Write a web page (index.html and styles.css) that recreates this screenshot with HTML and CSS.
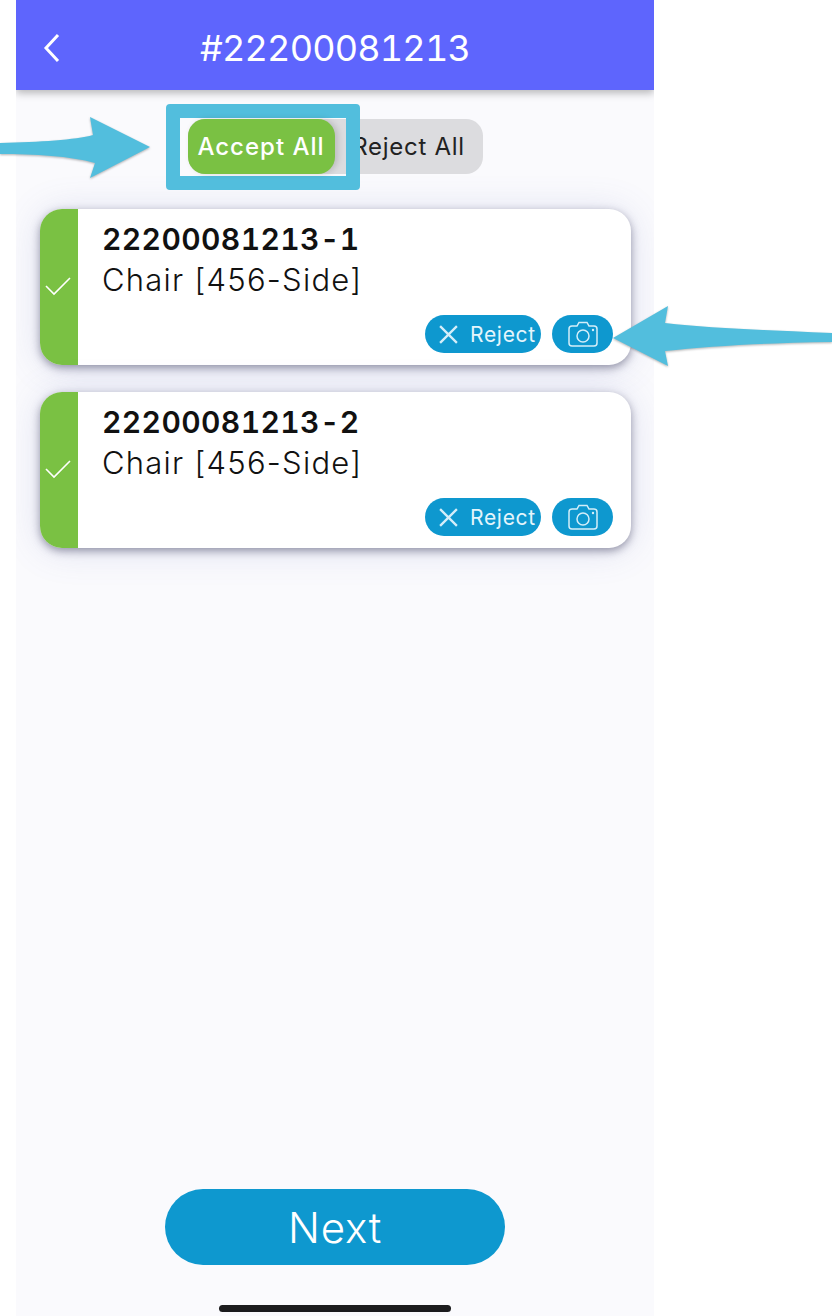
FILE: index.html
```html
<!DOCTYPE html>
<html lang="en">
<head>
    <meta charset="UTF-8">
    <meta name="viewport" content="width=device-width, initial-scale=1.0">
    <title>Order #22200081213</title>
    <link rel="stylesheet" href="styles.css">
</head>
<body>
    <div class="screen">
        <header class="topbar">
            <svg class="back" viewBox="0 0 20 30" width="20" height="30"><path d="M17 2 L5 15 L17 28"/></svg>
            <h1>#22200081213</h1>
        </header>

        <div class="toggle-row">
            <div class="toggle">
                <button class="toggle-on">Accept All</button>
                <button class="toggle-off">Reject All</button>
            </div>
        </div>

        <div class="cards">
            <div class="card">
                <div class="card-status">
                    <svg viewBox="0 0 26 20" width="26" height="20"><path d="M1 10 L9 18 L25 2"/></svg>
                </div>
                <div class="card-body">
                    <div class="card-id">22200081213-1</div>
                    <div class="card-name">Chair [456-Side]</div>
                    <div class="card-actions">
                        <button class="pill pill-reject">
                            <svg viewBox="0 0 20 20" width="21" height="21"><path d="M2 2 L18 18 M18 2 L2 18"/></svg>
                            Reject
                        </button>
                        <button class="pill pill-camera">
                            <svg viewBox="0 0 30 26" width="30" height="26"><path d="M4 5 H9 L11 1.5 H19 L21 5 H26 Q29 5 29 8 V22 Q29 25 26 25 H4 Q1 25 1 22 V8 Q1 5 4 5 Z"/><circle cx="15" cy="15" r="6"/><circle class="dot" cx="25" cy="9" r="1.2"/></svg>
                        </button>
                    </div>
                </div>
            </div>

            <div class="card">
                <div class="card-status">
                    <svg viewBox="0 0 26 20" width="26" height="20"><path d="M1 10 L9 18 L25 2"/></svg>
                </div>
                <div class="card-body">
                    <div class="card-id">22200081213-2</div>
                    <div class="card-name">Chair [456-Side]</div>
                    <div class="card-actions">
                        <button class="pill pill-reject">
                            <svg viewBox="0 0 20 20" width="21" height="21"><path d="M2 2 L18 18 M18 2 L2 18"/></svg>
                            Reject
                        </button>
                        <button class="pill pill-camera">
                            <svg viewBox="0 0 30 26" width="30" height="26"><path d="M4 5 H9 L11 1.5 H19 L21 5 H26 Q29 5 29 8 V22 Q29 25 26 25 H4 Q1 25 1 22 V8 Q1 5 4 5 Z"/><circle cx="15" cy="15" r="6"/><circle class="dot" cx="25" cy="9" r="1.2"/></svg>
                        </button>
                    </div>
                </div>
            </div>
        </div>

        <button class="next">Next</button>
        <div class="home-bar"></div>
    </div>

    <!-- annotations drawn on top of the screenshot -->
    <div class="callout-box"></div>
    <svg class="arrow arrow-left" viewBox="0 0 152 64" width="152" height="64"><path d="M0 27 C40 26 75 24 93 19 L90 1 L150 31 L90 62 L95 47 C70 40 35 38 0 38 Z"/></svg>
    <svg class="arrow arrow-right" viewBox="0 0 219 62" width="219" height="62"><path d="M219 27 C150 24 95 22 52 17 L55 0 L0 32 L55 60 L52 45 C95 40 150 37 219 36 Z"/></svg>
</body>
</html>
```

FILE: styles.css
```css
* {
    box-sizing: border-box;
}
body {
    margin: 0;
    background-color: #fff;
    font-family: Inter, "Noto Sans", sans-serif;
    color: #111;
}
button {
    border: none;
    font-family: inherit;
    padding: 0;
}
.screen {
    width: 638px;
    height: 1316px;
    margin-left: 16px;
    background-color: #fafafd;
    display: flex;
    flex-direction: column;
    align-items: center;
    overflow: hidden;
}
.topbar {
    width: 100%;
    height: 90px;
    flex-shrink: 0;
    background-color: #5e65fd;
    box-shadow: 0 3px 8px rgba(0, 0, 0, 0.28);
    display: flex;
    align-items: center;
    justify-content: center;
    position: relative;
}
.topbar h1 {
    margin: 0 0 -6px;
    font-size: 36px;
    font-weight: 400;
    font-variant-numeric: tabular-nums;
    color: #fff;
    letter-spacing: -0.8px;
}
.back {
    position: absolute;
    left: 25px;
    top: 33px;
    fill: none;
    stroke: #fff;
    stroke-width: 3;
}
.toggle-row {
    margin-top: 29px;
}
.toggle {
    width: 295px;
    height: 55px;
    background-color: #dcdcdf;
    border-radius: 17px;
    display: flex;
    align-items: center;
}
.toggle-on {
    width: 147px;
    height: 55px;
    border-radius: 17px;
    background-color: #7ac143;
    color: #fff;
    font-size: 24px;
    font-weight: 500;
    letter-spacing: 1px;
    box-shadow: 3px 0 6px rgba(0, 0, 0, 0.15);
    position: relative;
    z-index: 1;
}
.toggle-off {
    flex: 1;
    height: 55px;
    background: none;
    color: #222;
    font-size: 24px;
    letter-spacing: 0.7px;
}
.cards {
    width: 591px;
    margin-top: 35px;
    margin-left: 1px;
    display: flex;
    flex-direction: column;
    gap: 27px;
}
.card {
    height: 156px;
    display: flex;
    background-color: #fff;
    border-radius: 22px;
    overflow: hidden;
    box-shadow: 0 3px 8px rgba(60, 60, 90, 0.5), 0 2px 36px rgba(90, 100, 180, 0.18);
}
.card-status {
    width: 38px;
    background-color: #7ac143;
    display: flex;
    align-items: center;
    justify-content: center;
}
.card-status svg {
    margin-right: 3px;
    margin-bottom: 2px;
    fill: none;
    stroke: #fff;
    stroke-width: 1.6;
}
.card-body {
    flex: 1;
    padding: 10px 18px 12px 24px;
    display: flex;
    flex-direction: column;
}
.card-id {
    font-size: 30px;
    font-weight: 600;
    font-variant-numeric: tabular-nums;
    letter-spacing: 0.4px;
    line-height: 40px;
}
.card-name {
    font-size: 31px;
    font-weight: 300;
    line-height: 41px;
    letter-spacing: 1.25px;
}
.card-actions {
    margin-top: auto;
    display: flex;
    justify-content: flex-end;
    gap: 11px;
}
.pill {
    height: 38px;
    border-radius: 19px;
    background-color: #0e98cf;
    color: #e4f5fc;
    font-size: 21px;
    letter-spacing: 0.7px;
    display: flex;
    align-items: center;
    justify-content: center;
}
.pill svg {
    fill: none;
    stroke: #d4eef9;
}
.pill-reject {
    width: 116px;
    padding-left: 13px;
    gap: 11px;
    justify-content: flex-start;
}
.pill-reject svg {
    stroke-width: 2.2;
}
.pill-camera {
    width: 61px;
}
.pill-camera svg {
    stroke-width: 1.5;
}
.pill-camera .dot {
    fill: #d4eef9;
    stroke: none;
}
.next {
    width: 340px;
    height: 76px;
    flex-shrink: 0;
    margin-top: auto;
    margin-bottom: 40px;
    border-radius: 38px;
    background-color: #0e98cf;
    color: #fff;
    font-size: 42px;
    font-weight: 300;
    letter-spacing: 0.8px;
}
.home-bar {
    width: 232px;
    height: 7px;
    flex-shrink: 0;
    margin-bottom: 4px;
    border-radius: 4px;
    background-color: #1c1c1e;
}
.callout-box {
    position: absolute;
    left: 166px;
    top: 104px;
    width: 194px;
    height: 86px;
    border: 14px solid #52bedd;
    border-radius: 4px;
}
.arrow {
    position: absolute;
    fill: #52bedd;
    filter: drop-shadow(0 1px 1px rgba(0, 0, 0, 0.3));
}
.arrow-left {
    left: 0;
    top: 116px;
}
.arrow-right {
    left: 613px;
    top: 306px;
}
```
